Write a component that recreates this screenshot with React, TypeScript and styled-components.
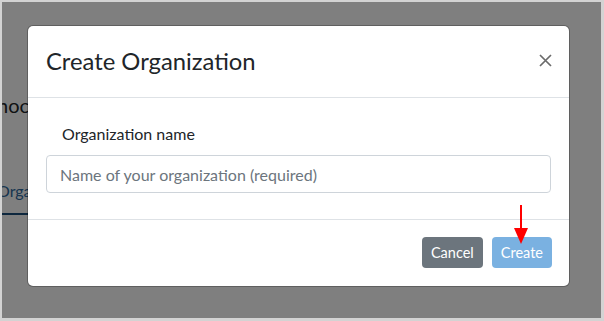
import React from 'react'
import styled, { createGlobalStyle } from 'styled-components'

const GlobalStyle = createGlobalStyle`
  html, body {
    margin: 0;
    padding: 0;
    background: #ffffff;
  }
  * {
    box-sizing: border-box;
  }
`

const Frame = styled.div`
  position: relative;
  width: 604px;
  height: 321px;
  border-style: solid;
  border-color: #d3d3d3;
  border-width: 2px 3px 3px 2px;
  overflow: hidden;
  background: #ffffff;
  font-family: 'Lato', 'Open Sans', sans-serif;
`

const Page = styled.div`
  display: flex;
  flex-direction: column;
  padding-top: 91px;
`

const PageHeading = styled.div`
  font-size: 20px;
  color: #212529;
  margin-left: -5px;
  height: 88px;
`

const Tab = styled.div`
  width: 60px;
  margin-left: -5px;
  padding-bottom: 13px;
  font-size: 16px;
  color: #2f6aa0;
  border-bottom: 2px solid #1b4f7c;
`

const Backdrop = styled.div`
  position: absolute;
  inset: 0;
  background: rgba(0, 0, 0, 0.5);
  padding: 24px 0 0 26px;
`

const Dialog = styled.div`
  width: 541px;
  height: 260px;
  background: #ffffff;
  border-radius: 5px;
  box-shadow: 0 0 0 1px rgba(0, 0, 0, 0.25);
  display: flex;
  flex-direction: column;
  overflow: hidden;
`

const Header = styled.div`
  height: 72px;
  display: flex;
  align-items: center;
  justify-content: space-between;
  padding: 0 18px 2px 18px;
  border-bottom: 1px solid #dee2e6;
`

const Title = styled.h2`
  margin: 0;
  font-size: 23.8px;
  font-weight: 400;
  color: #212529;
`

const CloseButton = styled.button`
  border: none;
  background: none;
  padding: 0;
  width: 14px;
  height: 14px;
  display: flex;
  align-items: center;
  justify-content: center;
  cursor: pointer;
  margin-right: -1px;
`

const Body = styled.div`
  flex: 1;
  padding: 26px 18px 0 18px;
  border-bottom: 1px solid #dee2e6;
`

const Label = styled.label`
  display: block;
  padding-left: 16px;
  font-size: 16px;
  color: #212529;
  margin-bottom: 12px;
`

const Input = styled.input`
  width: 100%;
  height: 38px;
  border: 1px solid #ced4da;
  border-radius: 4px;
  padding: 0 13px;
  font-family: inherit;
  font-size: 16px;
  color: #495057;
  outline: none;
  &::placeholder {
    color: #6c757d;
  }
`

const Footer = styled.div`
  position: relative;
  height: 66px;
  display: flex;
  align-items: center;
  justify-content: flex-end;
  gap: 9px;
  padding: 0 17px 1px 18px;
`

const Button = styled.button<{ $variant: 'secondary' | 'primary' }>`
  height: 31px;
  padding: 0 9px;
  border: none;
  border-radius: 4px;
  font-family: inherit;
  font-size: 14.5px;
  color: #ffffff;
  background: ${(p) => (p.$variant === 'secondary' ? '#6c757d' : '#7ab1e1')};
  cursor: pointer;
`

const Arrow = styled.svg`
  position: absolute;
  right: 40px;
  top: -15px;
`

export default function App() {
  return (
    <Frame>
      <GlobalStyle />
      <Page>
        <PageHeading>hoc</PageHeading>
        <Tab>Organizations</Tab>
      </Page>
      <Backdrop>
        <Dialog>
          <Header>
            <Title>Create Organization</Title>
            <CloseButton aria-label="close">
              <svg width="13" height="13" viewBox="0 0 13 13">
                <path d="M1 1 L12 12 M12 1 L1 12" stroke="#6b6b6b" strokeWidth="1.7" fill="none" />
              </svg>
            </CloseButton>
          </Header>
          <Body>
            <Label>Organization name</Label>
            <Input placeholder="Name of your organization (required)" />
          </Body>
          <Footer>
            <Button $variant="secondary">Cancel</Button>
            <Button $variant="primary" disabled>
              Create
            </Button>
            <Arrow width="16" height="40" viewBox="0 0 16 40">
              <line x1="8" y1="0" x2="8" y2="26" stroke="#ff0000" strokeWidth="2" />
              <polygon points="1,23 15,23 8,39" fill="#ff0000" />
            </Arrow>
          </Footer>
        </Dialog>
      </Backdrop>
    </Frame>
  )
}
